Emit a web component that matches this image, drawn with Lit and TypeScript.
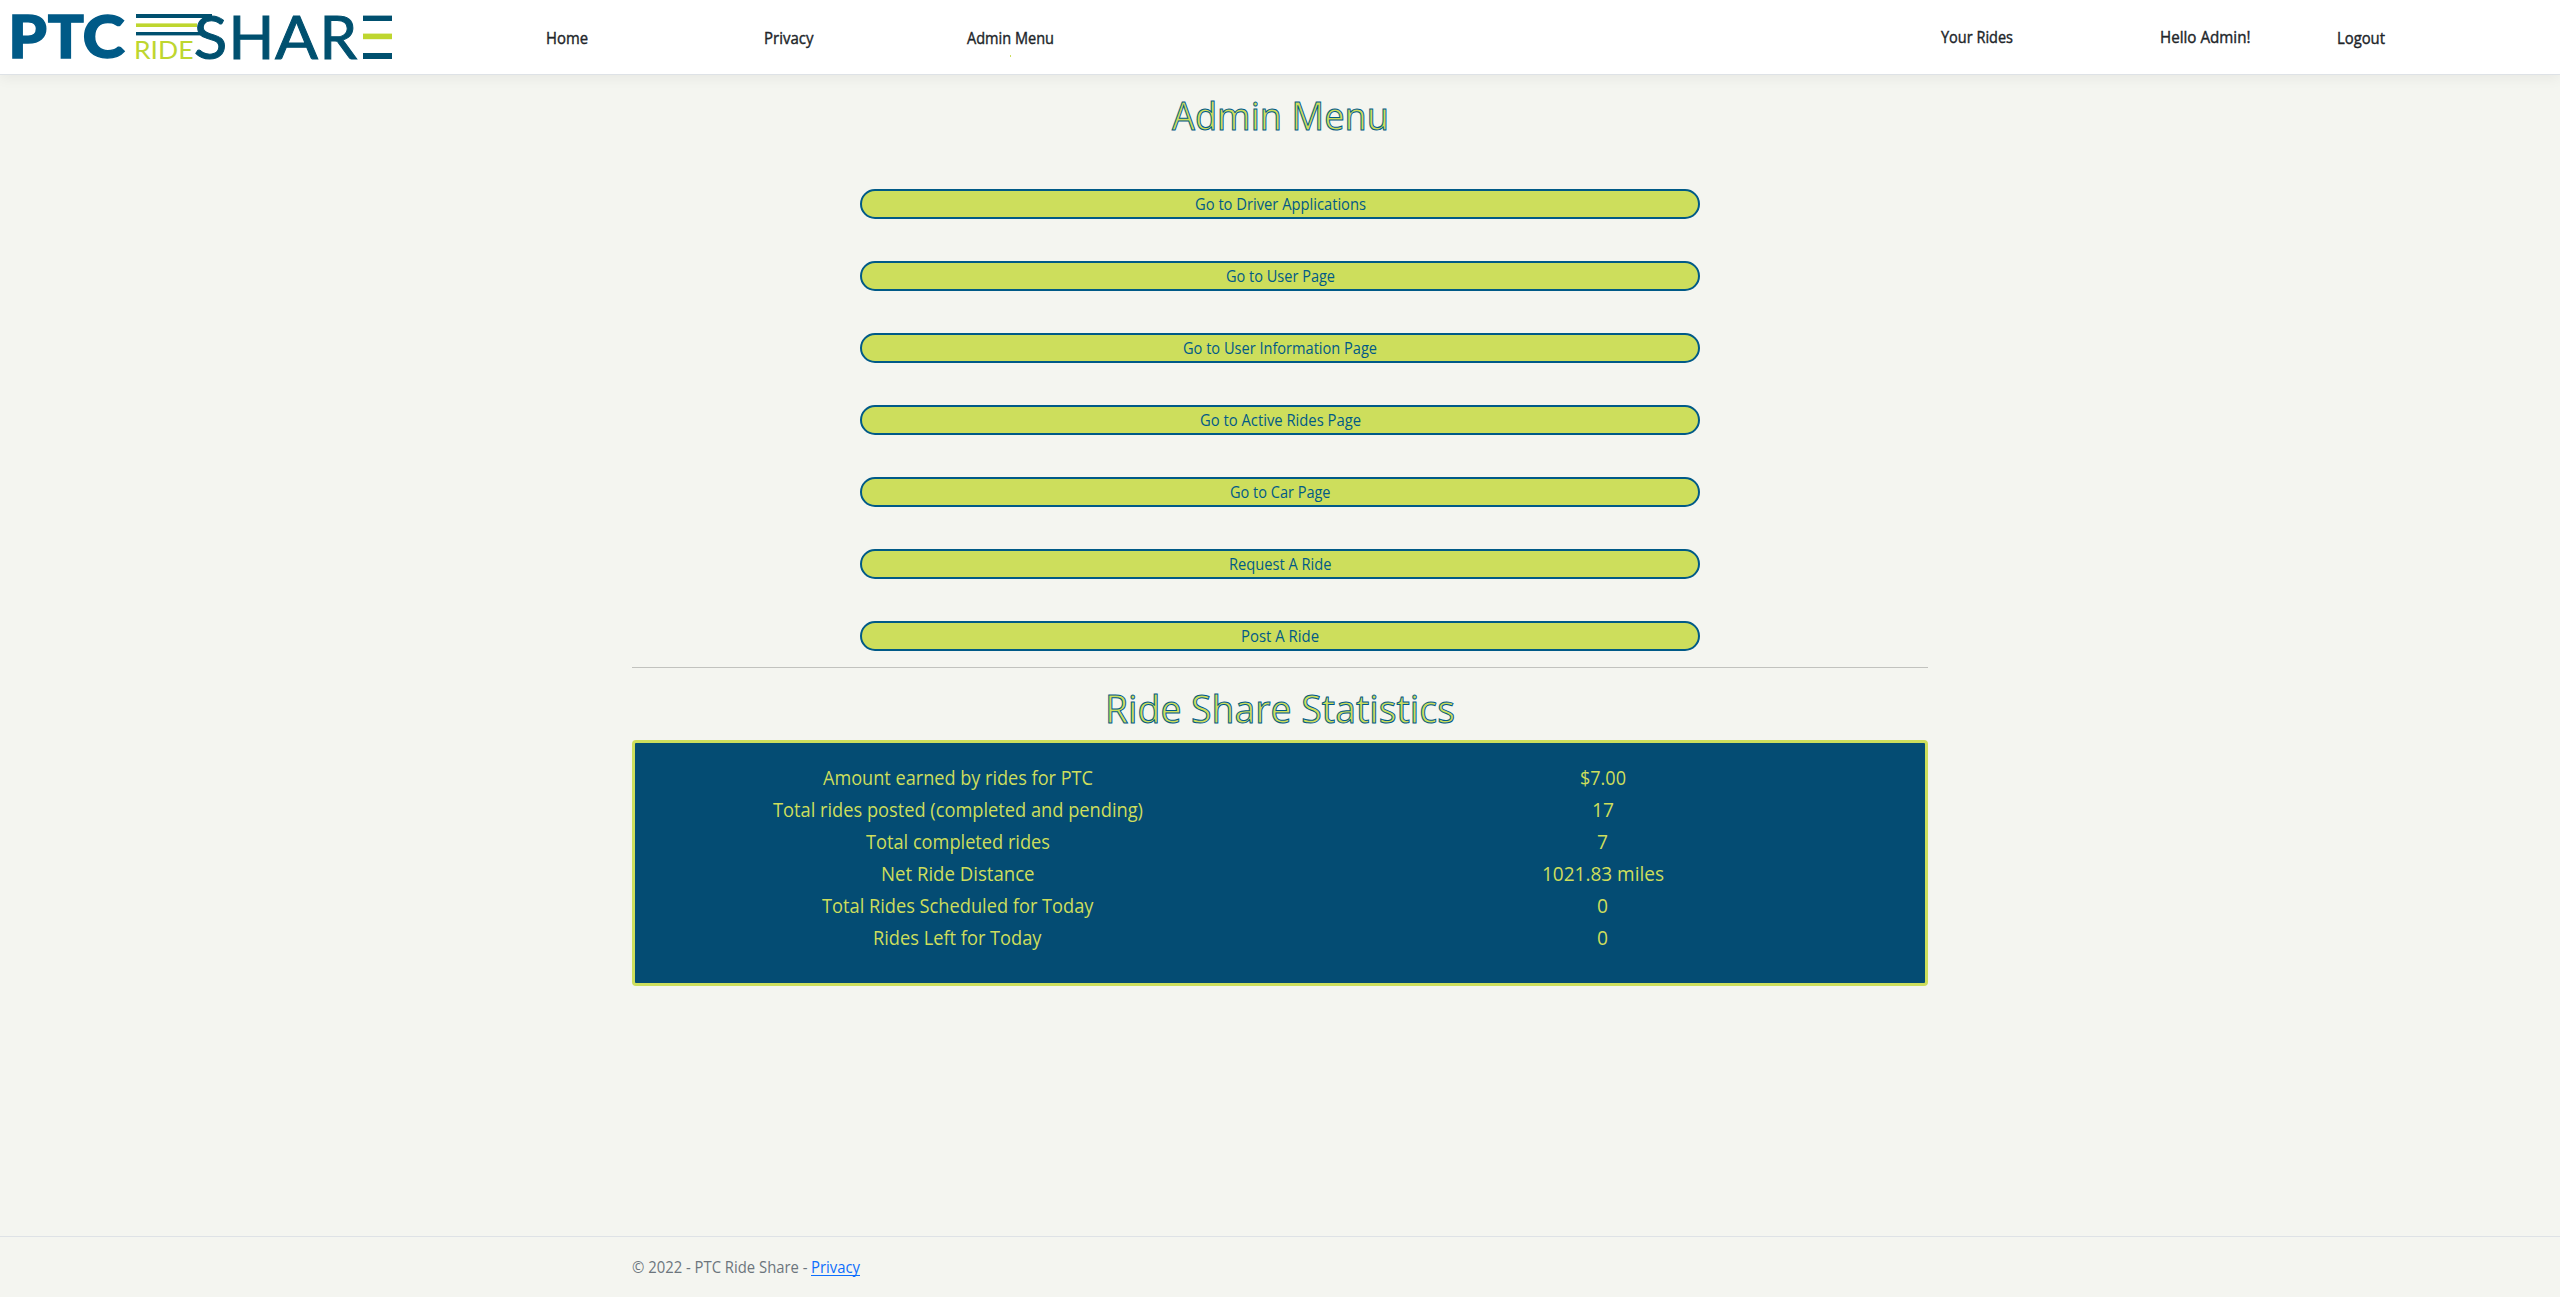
import { LitElement, html, css } from "lit";
import { customElement, property, state } from "lit/decorators.js";

/** One line of text, condensed or widened horizontally to a set measure. */
@customElement("fit-text")
class FitText extends LitElement {
  static styles = css`
    :host {
      display: inline-block;
      white-space: nowrap;
      text-align: left;
      vertical-align: top;
    }
    .ink {
      display: inline-block;
      vertical-align: top;
      transform-origin: 0 0;
    }
  `;
  @property() text = "";
  @property({ type: Number }) measure = 0;
  @state() private scale = 1;

  firstUpdated() {
    const ink = this.renderRoot.querySelector(".ink") as HTMLElement;
    const natural = ink.getBoundingClientRect().width;
    this.style.width = `${this.measure}px`;
    if (natural > 0) this.scale = this.measure / natural;
  }
  render() {
    return html`<span class="ink" style="transform:scaleX(${this.scale})">${this.text}</span>`;
  }
}

@customElement("brand-logo")
class BrandLogo extends LitElement {
  static styles = css`
    :host { display: block; }
    .logo { display: block; width: 400px; height: 74px; font-family: Lato, "Liberation Sans", sans-serif; }
    .ptc { fill: #005a87; stroke: #005a87; stroke-width: 1.4; font-weight: 900; font-size: 58.8px; }
    .ride { fill: #bed62f; font-size: 25px; }
    .share { fill: #00506f; stroke: #00506f; stroke-width: 1; font-size: 60px; }
    .blue { fill: #00506f; }
    .lime { fill: #bed62f; }
  `;
  render() {
    return html`<svg class="logo" viewBox="0 0 400 74" role="img" aria-label="PTC Ride Share">
      <text class="ptc" y="58.3" transform="translate(8.2) scale(1.05 1)">P</text>
      <text class="ptc" y="58.3" transform="translate(47.7) scale(1.02 1)">T</text>
      <text class="ptc" y="58.3" transform="translate(82.4) scale(1.09 1)">C</text>
      <rect class="blue" x="136" y="14" width="76" height="4" />
      <rect class="lime" x="136" y="23.4" width="61" height="3.6" />
      <rect class="blue" x="136" y="32" width="66" height="3.4" />
      <text class="ride" y="58.7" x="134" textLength="59.5" lengthAdjust="spacingAndGlyphs">RIDE</text>
      <text class="share" y="58.8" transform="translate(193.8) scale(1.03 1)">S</text>
      <text class="share" y="58.5" x="228.5">H</text>
      <text class="share" y="58.5" transform="translate(275) scale(1.06 1)">A</text>
      <text class="share" y="58.5" x="319.5">R</text>
      <rect class="blue" x="363" y="15.6" width="29" height="5.4" />
      <rect class="lime" x="363" y="33.6" width="29" height="5.6" />
      <rect class="blue" x="363" y="53" width="29" height="6" />
    </svg>`;
  }
}

type Line = [string, number];

const ACTIONS: Line[] = [
  ["Go to Driver Applications", 171],
  ["Go to User Page", 109],
  ["Go to User Information Page", 194],
  ["Go to Active Rides Page", 161],
  ["Go to Car Page", 100.5],
  ["Request A Ride", 102.5],
  ["Post A Ride", 78],
];

const STATS: [Line, Line][] = [
  [["Amount earned by rides for PTC", 270], ["$7.00", 46]],
  [["Total rides posted (completed and pending)", 370], ["17", 22]],
  [["Total completed rides", 184], ["7", 11]],
  [["Net Ride Distance", 153.5], ["1021.83 miles", 122]],
  [["Total Rides Scheduled for Today", 271.5], ["0", 11]],
  [["Rides Left for Today", 168.5], ["0", 11]],
];

@customElement("app-root")
class AppRoot extends LitElement {
  static styles = css`
    :host {
      display: block;
      font-family: "Open Sans", "Noto Sans", sans-serif;
      font-size: 15.7px;
      line-height: 24px;
      color: #212529;
    }
    .page {
      display: flex;
      flex-direction: column;
      min-height: 1297px;
      background: #f4f5f0;
    }
    .header {
      display: flex;
      align-items: center;
      height: 74px;
      background: #fff;
      border-bottom: 1px solid #dee2e6;
      box-shadow: 0 4px 12px rgba(0, 0, 0, 0.05);
    }
    .nav {
      display: flex;
      flex: 1;
      padding-top: 1px;
      -webkit-text-stroke: 0.4px #212529;
    }
    .home { margin-left: 145.5px; }
    .privacy { margin-left: 176.5px; }
    .admin { position: relative; margin-left: 153px; }
    .admin::after {
      content: "";
      position: absolute;
      left: 43px;
      top: 29px;
      width: 1px;
      height: 2px;
      background: #cdde5c;
    }
    .rides { margin: -1px 0 1px auto; }
    .hello { margin: -1px 0 1px 147.5px; }
    .logout { margin: 0 175.5px 0 86px; }
    .container {
      box-sizing: border-box;
      width: 1320px;
      margin: 0 auto;
      padding: 0 12px;
    }
    .main { flex: 1; text-align: center; }
    .title {
      margin: 16px 0 0;
      font-size: 39px;
      line-height: 48px;
      font-weight: 400;
      color: #cdde5c;
      -webkit-text-stroke: 1px #005a87;
    }
    .actions {
      display: flex;
      flex-direction: column;
      align-items: center;
      gap: 42px;
      margin-top: 50px;
    }
    .action {
      box-sizing: border-box;
      width: 840px;
      height: 30px;
      padding: 1px 0;
      border: 2px solid #005a87;
      border-radius: 15px;
      background: #cdde5c;
      color: #005a87;
      font: inherit;
    }
    .rule { height: 1px; margin-top: 16px; background: #c1c2be; }
    .stats {
      box-sizing: border-box;
      height: 246px;
      margin-top: 8px;
      padding-top: 19px;
      border: 3px solid #cdde5c;
      border-radius: 4px;
      background: #044c73;
      color: #cdde5c;
      font-size: 19.5px;
      line-height: 32px;
    }
    .row { display: grid; grid-template-columns: 1fr 1fr; }
    .footer { height: 60px; border-top: 1px solid #dee2e6; color: #6c757d; }
    .note { display: flex; padding-top: 18px; }
    .link { margin-left: 3px; color: #0d6efd; }
    .link fit-text { height: 20px; border-bottom: 1px solid #0d6efd; }
  `;

  private line([text, measure]: Line) {
    return html`<fit-text .text=${text} .measure=${measure}></fit-text>`;
  }

  render() {
    return html`<div class="page">
      <header class="header">
        <brand-logo></brand-logo>
        <nav class="nav">
          <a class="home">${this.line(["Home", 42])}</a>
          <a class="privacy">${this.line(["Privacy", 49.5])}</a>
          <a class="admin">${this.line(["Admin Menu", 87])}</a>
          <a class="rides">${this.line(["Your Rides", 72])}</a>
          <a class="hello">${this.line(["Hello Admin!", 90.5])}</a>
          <a class="logout">${this.line(["Logout", 48])}</a>
        </nav>
      </header>
      <main class="main container">
        <h1 class="title">${this.line(["Admin Menu", 217])}</h1>
        <div class="actions">
          ${ACTIONS.map((a) => html`<button class="action">${this.line(a)}</button>`)}
        </div>
        <div class="rule"></div>
        <h1 class="title">${this.line(["Ride Share Statistics", 350])}</h1>
        <section class="stats">
          ${STATS.map(
            ([label, value]) => html`<div class="row">
              <div>${this.line(label)}</div>
              <div>${this.line(value)}</div>
            </div>`
          )}
        </section>
      </main>
      <footer class="footer">
        <div class="container note">
          ${this.line(["© 2022 - PTC Ride Share -", 175.5])}
          <a class="link">${this.line(["Privacy", 49])}</a>
        </div>
      </footer>
    </div>`;
  }
}
